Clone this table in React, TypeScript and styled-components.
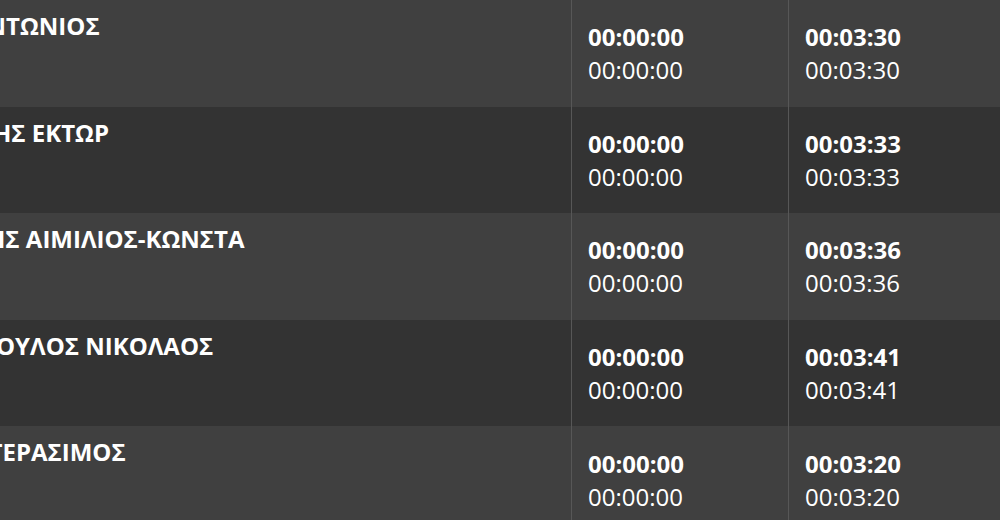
import React from 'react'
import styled, { createGlobalStyle } from 'styled-components'

const GlobalStyle = createGlobalStyle`
  html, body {
    margin: 0;
    padding: 0;
    background: #333333;
    overflow: hidden;
  }
  body {
    font-family: 'Open Sans', 'Noto Sans', sans-serif;
    color: #ffffff;
  }
`

interface ResultRow {
  name: string
  offset: number
  start: string
  finish: string
}

const rows: ResultRow[] = [
  { name: 'ΑΝΤΩΝΙΟΣ', offset: -30, start: '00:00:00', finish: '00:03:30' },
  { name: 'ΗΣ ΕΚΤΩΡ', offset: -7, start: '00:00:00', finish: '00:03:33' },
  { name: 'ΗΣ ΑΙΜΙΛΙΟΣ-ΚΩΝΣΤΑ', offset: -13, start: '00:00:00', finish: '00:03:36' },
  { name: 'ΟΥΛΟΣ ΝΙΚΟΛΑΟΣ', offset: -4, start: '00:00:00', finish: '00:03:41' },
  { name: 'ΓΕΡΑΣΙΜΟΣ', offset: -11, start: '00:00:00', finish: '00:03:20' },
]

const Viewport = styled.div`
  width: 1000px;
  height: 520px;
  overflow: hidden;
`

const Table = styled.div`
  display: flex;
  flex-direction: column;
  width: 1100px;
`

const Row = styled.div<{ $odd: boolean }>`
  display: grid;
  grid-template-columns: 571px 217px 312px;
  height: 106.6px;
  background: ${({ $odd }) => ($odd ? '#333333' : '#404040')};
`

const NameCell = styled.div`
  overflow: hidden;
  padding-top: 12px;
`

const Name = styled.div<{ $offset: number }>`
  margin-left: ${({ $offset }) => $offset}px;
  font-size: 24px;
  font-weight: 700;
  line-height: 28px;
  white-space: nowrap;
`

const TimeCell = styled.div`
  display: flex;
  flex-direction: column;
  justify-content: center;
  padding-left: 16px;
  border-left: 1px solid #575757;
`

const TimeBold = styled.div`
  font-size: 24px;
  font-weight: 700;
  line-height: 33px;
`

const Time = styled.div`
  font-size: 24px;
  font-weight: 400;
  line-height: 33px;
`

export default function App() {
  return (
    <Viewport>
      <GlobalStyle />
      <Table>
        {rows.map((r, i) => (
          <Row key={i} $odd={i % 2 === 1}>
            <NameCell>
              <Name $offset={r.offset}>{r.name}</Name>
            </NameCell>
            <TimeCell>
              <TimeBold>{r.start}</TimeBold>
              <Time>{r.start}</Time>
            </TimeCell>
            <TimeCell>
              <TimeBold>{r.finish}</TimeBold>
              <Time>{r.finish}</Time>
            </TimeCell>
          </Row>
        ))}
      </Table>
    </Viewport>
  )
}
